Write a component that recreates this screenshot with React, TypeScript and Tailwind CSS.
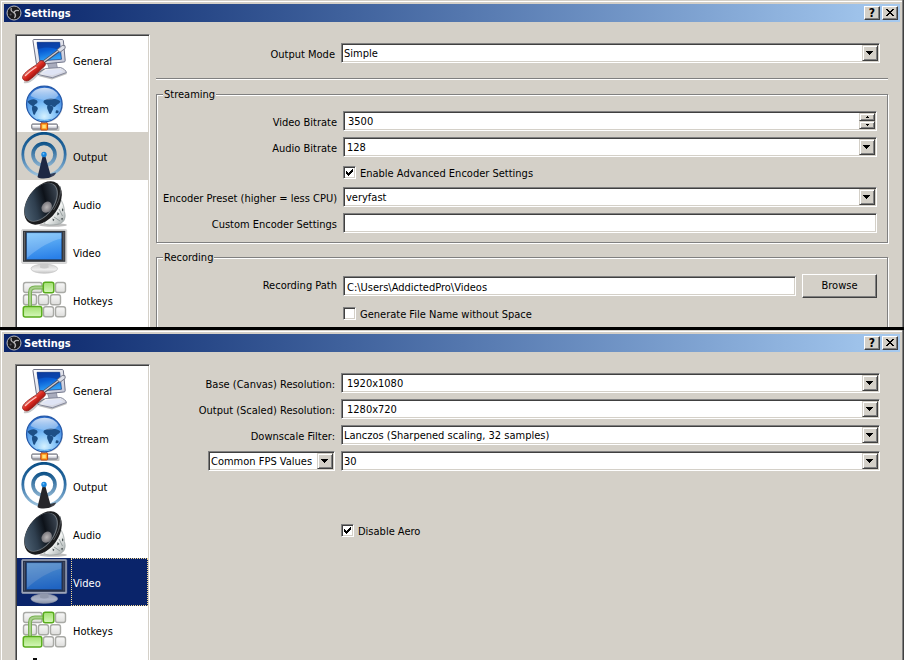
import { useState } from "react";
import type { ReactNode } from "react";
import clsx from "clsx";

const sunken =
  "border border-t-[#808080] border-l-[#808080] border-r-white border-b-white shadow-[inset_1px_1px_#404040,inset_-1px_-1px_#d4d0c8]";
const raised =
  "bg-[#d4d0c8] border border-t-white border-l-white border-r-[#404040] border-b-[#404040] shadow-[inset_-1px_-1px_#808080]";
const raisedThick =
  "bg-[#d4d0c8] border border-t-[#d4d0c8] border-l-[#d4d0c8] border-r-[#404040] border-b-[#404040] shadow-[inset_1px_1px_#fff,inset_-1px_-1px_#808080]";

const ObsLogo = () => (
  <svg viewBox="0 0 16 16" className="size-4" aria-hidden="true">
    <circle cx="8" cy="8" r="7" fill="#1c1a1c" stroke="#b9b9bd" strokeWidth="1" />
    <g fill="none" stroke="#b4b2b4" strokeWidth="1.3" strokeLinecap="round">
      <path d="M5.2 3.4c-.6 2 .6 3.6 2.6 4" />
      <path d="M12.4 5.6c-2-.7-3.8.2-4.4 2.1" />
      <path d="M8.6 12.6c1.2-1.5.9-3.6-.6-4.8" />
    </g>
    <circle cx="4.6" cy="9.4" r="1" fill="#55535a" />
  </svg>
);

const GeneralIcon = () => (
  <svg viewBox="0 0 48 48" className="size-12" aria-hidden="true">
    <defs>
      <linearGradient id="gen-screen" x1="0" y1="0" x2="0.3" y2="1">
        <stop offset="0" stopColor="#0a3fa8" />
        <stop offset="0.5" stopColor="#0a5fd6" />
        <stop offset="1" stopColor="#2fa0f5" />
      </linearGradient>
      <linearGradient id="gen-case" x1="0" y1="0" x2="1" y2="1">
        <stop offset="0" stopColor="#ffffff" />
        <stop offset="1" stopColor="#c3c6d6" />
      </linearGradient>
      <linearGradient id="gen-handle" gradientUnits="userSpaceOnUse" x1="9" y1="32" x2="16" y2="40">
        <stop offset="0" stopColor="#f0847a" />
        <stop offset="0.45" stopColor="#dd2c22" />
        <stop offset="1" stopColor="#8f0f0c" />
      </linearGradient>
    </defs>
    <path d="M18 40l14 3.500 15-5.500-2-3-12 1z" fill="#000" opacity="0.25" />
    <path d="M27 26l9-1 1.500 7-8 2z" fill="#a9acbd" stroke="#70748a" strokeWidth="0.6" />
    <path d="M17.500 37l8-4.500L40.500 31.500c3 1 5.500 3 6 5l-14 5.200-14.500-3.200z" fill="url(#gen-case)" stroke="#7b7f93" strokeWidth="0.9" strokeLinejoin="round" />
    <path d="M21.500 37l6-3 12-.8 3.500 2.600-11 3.400z" fill="#dfe4f5" />
    <path d="M14 3.500h28c1 0 1.300.5 1.400 1.400l1.800 19.500c0 1-.4 1.500-1.400 1.600L18 28.500c-1 0-1.500-.5-1.700-1.400L13 5c-.1-1 .1-1.500 1-1.500z" fill="url(#gen-case)" stroke="#6e7287" strokeWidth="1" />
    <path d="M17 6.300h22.700l1.800 17-21.700 1.700z" fill="url(#gen-screen)" stroke="#0a2a70" strokeWidth="0.6" />
    <path d="M17.500 13c8-2.500 15-2 23 1.500L39.500 6.500H17z" fill="#0b3796" opacity="0.6" />
    <path d="M21.500 27.500L39 14.500" stroke="#4b4e5c" strokeWidth="2.900" />
    <path d="M21.500 27.200L39 14.200" stroke="#c9ccd8" strokeWidth="1.300" />
    <path d="M37 13.800l5.200-4.300 2.800.2.200 2.600-5.200 4z" fill="#dcdfe8" stroke="#6d7080" strokeWidth="0.9" strokeLinejoin="round" />
    <path d="M4 46c4 1.200 7-1 10.500-4.500L24 32.500" fill="none" stroke="#000" strokeWidth="2" opacity="0.22" />
    <path d="M20.500 24.800c2-.8 5.300 1.800 4.800 4-.2 1.600-2.200 2.400-3.600 4C17.500 37 12.500 42 9 44.200 5.500 46.200 1.700 43.500 2.700 40.500c1.300-4 9.100-8.700 13.700-11.800 1.900-1.200 2.600-3.300 4.100-3.900z" fill="url(#gen-handle)" stroke="#8b1512" strokeWidth="0.8" />
    <path d="M5.500 39.500c3-3.300 7-6 10.500-8.300" fill="none" stroke="#ffc9c2" strokeWidth="1.200" strokeLinecap="round" />
  </svg>
);

const StreamIcon = () => (
  <svg viewBox="0 0 48 48" className="size-12" aria-hidden="true">
    <defs>
      <radialGradient id="globe" cx="0.5" cy="0.85" r="0.85">
        <stop offset="0" stopColor="#d4f1ff" />
        <stop offset="0.4" stopColor="#7fc0f8" />
        <stop offset="0.85" stopColor="#3a84de" />
        <stop offset="1" stopColor="#1f5fc0" />
      </radialGradient>
      <linearGradient id="globe-shine" x1="0" y1="0" x2="0" y2="1">
        <stop offset="0" stopColor="#ffffff" stopOpacity="0.8" />
        <stop offset="1" stopColor="#ffffff" stopOpacity="0.2" />
      </linearGradient>
    </defs>
    <rect x="12.500" y="42" width="27" height="5" rx="1" fill="#000" opacity="0.22" />
    <rect x="21.800" y="37" width="5" height="4" fill="#d5d7dd" stroke="#6c6e78" strokeWidth="0.8" />
    <rect x="11.800" y="40" width="25.500" height="5" rx="0.8" fill="#cfd0d8" stroke="#666873" strokeWidth="1" />
    <rect x="12.500" y="41" width="24" height="1.500" fill="#fff" />
    <rect x="20.800" y="39" width="6.800" height="7" rx="0.8" fill="#ff9a1f" stroke="#c2420a" strokeWidth="1" />
    <rect x="22.300" y="40.800" width="3.500" height="3.500" fill="#ffe27a" />
    <circle cx="25" cy="20.800" r="18" fill="#000" opacity="0.15" />
    <circle cx="24.300" cy="20" r="17.800" fill="url(#globe)" stroke="#2357a8" strokeWidth="1.200" />
    <g fill="#1d4f86">
      <path d="M7.500 17.500c1.500-1.500 4-2.500 6.500-2.300 2 .3 4 1.500 3.500 3-.4 1.500-2.500 1.600-3.200 3-.4 1.200-1.500 1-2.300.6-1.600-.8-3.300-2.300-4.500-4.300z" />
      <path d="M12.500 22c2-.6 5.500.4 5.300 2.700-.2 2-2 3-2.800 5.500-.4 1-1.500.6-1.900-.8-.5-2.300-2-5-.6-7.400z" />
      <path d="M24 16.500c2.500-2 6-2.500 9-1.800 3 .5 5.500.8 7.300 2.500-.3 2-1.800 2.300-3 3.300-1.500.8-1.800 3-3.400 2.500-1.200-.8-3.200-2.700-4.400-1.800-1 1-2.600.3-3.600-.6-1.600-1.400-3.300-2.300-1.900-4.100z" />
      <path d="M27.500 21.500c2-1 5.500 0 5.800 2 .3 2.200-1.500 3.300-2.100 5.800-.5 1.300-1.800 1-2.200-.5-.6-2.400-2.800-4.900-1.500-7.300z" />
      <path d="M36 26.500c1.500-.7 3 .2 2.600 1.700-.5 1.300-2.700 1.600-3.100.3z" />
    </g>
    <path d="M10.500 12c2-5.500 8-8.300 14-8.300S36.500 6.500 38.300 11.500c-3 4-7 4.500-11 4.500-6 0-11.500-1.500-16.800-4z" fill="url(#globe-shine)" />
    <path d="M17 35.200c5 1.600 9.500 1.600 14.500 0" fill="none" stroke="#4aa0e6" strokeWidth="1" />
  </svg>
);

const OutputIcon = () => (
  <svg viewBox="0 0 48 48" className="size-12" aria-hidden="true">
    <defs>
      <linearGradient id="ring" gradientUnits="userSpaceOnUse" x1="0" y1="0" x2="0" y2="46">
        <stop offset="0" stopColor="#0a4f86" />
        <stop offset="0.45" stopColor="#2c6ca3" />
        <stop offset="1" stopColor="#a9cce4" />
      </linearGradient>
      <linearGradient id="ring-inner" gradientUnits="userSpaceOnUse" x1="0" y1="10" x2="0" y2="35">
        <stop offset="0" stopColor="#0a4f86" />
        <stop offset="1" stopColor="#8db4d2" />
      </linearGradient>
    </defs>
    <circle cx="24" cy="22.500" r="21.200" fill="none" stroke="url(#ring)" strokeWidth="2.800" />
    <circle cx="24" cy="22.500" r="11" fill="none" stroke="url(#ring-inner)" strokeWidth="3.600" />
    <path d="M26 43l9.800-2.500c.4 2-2.800 4.500-8 5.500z" fill="currentColor" opacity="0.85" />
    <path d="M22.700 24h2.600L31 44.500c-2 2.400-11.500 2.600-13.500.4z" fill="currentColor" />
    <circle cx="24" cy="22.500" r="2.700" fill="#1583dc" />
    <circle cx="23.500" cy="21.800" r="1" fill="#6fc0f8" />
  </svg>
);

const AudioIcon = () => (
  <svg viewBox="0 0 48 48" className="size-12" aria-hidden="true">
    <defs>
      <linearGradient id="cone" gradientUnits="userSpaceOnUse" x1="6" y1="10" x2="34" y2="34">
        <stop offset="0" stopColor="#4c6072" />
        <stop offset="0.35" stopColor="#2f3f4f" />
        <stop offset="0.65" stopColor="#0d1219" />
        <stop offset="1" stopColor="#38424e" />
      </linearGradient>
      <linearGradient id="magnet" x1="0" y1="0" x2="1" y2="1">
        <stop offset="0" stopColor="#8c9494" />
        <stop offset="0.5" stopColor="#f2f4f3" />
        <stop offset="1" stopColor="#9aa2a2" />
      </linearGradient>
      <radialGradient id="dust">
        <stop offset="0" stopColor="#b9b6b7" />
        <stop offset="1" stopColor="#77767b" />
      </radialGradient>
    </defs>
    <ellipse cx="33" cy="45" rx="14" ry="1.800" fill="#000" opacity="0.25" />
    <path d="M41 20c2 3 3.500 7.500 3.300 11.500.8 2 1.200 4 .6 6.500-.8 4-4 6-8 6.500-5 .8-10 .7-13-1z" fill="url(#magnet)" stroke="#8b9393" strokeWidth="0.6" />
    <path d="M37.500 32l2 2-2.300 1.500zM42 28l1.500 2-1.500 1.500zM32.500 38.500l2 1.200-1.500 1.600zM41 38.500l2-.5-.8 2.500z" fill="#3b4446" />
    <path d="M39 29l3.500 7M34 37l6 4" stroke="#8f9898" strokeWidth="0.9" />
    <ellipse cx="23" cy="23" rx="24.200" ry="15.500" transform="rotate(-55 23 23)" fill="#1b1c1e" />
    <ellipse cx="21.300" cy="22.200" rx="22" ry="13.200" transform="rotate(-55 21.300 22.200)" fill="#6d757c" />
    <ellipse cx="20.700" cy="22" rx="21.400" ry="12.700" transform="rotate(-55 20.700 22)" fill="url(#cone)" />
    <ellipse cx="26.700" cy="27.200" rx="6" ry="4.800" transform="rotate(-55 26.700 27.200)" fill="url(#dust)" />
    <path d="M39.800 6c2 6.500-.8 15.500-6.300 24" fill="none" stroke="#5a5f63" strokeWidth="0.9" />
  </svg>
);

const VideoIcon = () => (
  <svg viewBox="0 0 48 48" className="size-12" aria-hidden="true">
    <defs>
      <linearGradient id="tv-screen" x1="0.3" y1="0" x2="0.5" y2="1">
        <stop offset="0" stopColor="#6fbdf9" />
        <stop offset="1" stopColor="#2a80e8" />
      </linearGradient>
      <linearGradient id="tv-stand" x1="0" y1="0" x2="0" y2="1">
        <stop offset="0" stopColor="#cfcfcf" />
        <stop offset="0.6" stopColor="#efefef" />
        <stop offset="1" stopColor="#c2c2c2" />
      </linearGradient>
    </defs>
    <path d="M20 35.500h8l.8 4h-9.600z" fill="#b5b5b5" />
    <ellipse cx="24.300" cy="40.700" rx="13.300" ry="4.600" fill="url(#tv-stand)" stroke="#c4c4c4" strokeWidth="0.7" />
    <path d="M20.500 36h7.500l.8 3.500c-2.500 1.200-6.500 1.200-9 0z" fill="#c9c9c9" />
    <rect x="1.700" y="1.500" width="45" height="34" rx="1" fill="#dcdcdc" stroke="#c8c8c8" strokeWidth="0.7" />
    <rect x="3" y="2.800" width="42.300" height="31" fill="#35383d" />
    <path d="M4.500 4v28.500M43.800 4v28.500" stroke="#6d7075" strokeWidth="0.8" />
    <rect x="6.700" y="4.800" width="35" height="26.500" fill="url(#tv-screen)" stroke="#1d4f90" strokeWidth="0.6" />
    <path d="M7 5h34.500v5.500C30 13 17 21 7 30z" fill="#fff" opacity="0.2" />
  </svg>
);

const greyKeys = [
  { x: 3.5, y: 6.5, w: 18.5 },
  { x: 35.5, y: 6.5, w: 10 },
  { x: 3.5, y: 18.7, w: 13 },
  { x: 18.5, y: 18.7, w: 10 },
  { x: 30.5, y: 18.7, w: 10 },
  { x: 23.5, y: 30.7, w: 10 },
  { x: 35.5, y: 30.7, w: 10 },
];

const HotkeysIcon = () => (
  <svg viewBox="0 0 48 48" className="size-12" aria-hidden="true">
    <defs>
      <linearGradient id="key" x1="0" y1="0" x2="0" y2="1">
        <stop offset="0" stopColor="#f8f8f8" />
        <stop offset="1" stopColor="#dededc" />
      </linearGradient>
      <linearGradient id="key-on" x1="0" y1="0" x2="0" y2="1">
        <stop offset="0" stopColor="#a2e070" />
        <stop offset="1" stopColor="#d6f7bb" />
      </linearGradient>
    </defs>
    {greyKeys.map((k) => (
      <rect key={`${k.x}-${k.y}`} x={k.x} y={k.y} width={k.w} height="10" rx="2.200" fill="url(#key)" stroke="#a9aaa6" strokeWidth="1.400" />
    ))}
    <path d="M24 11.500h-9c-3.500 0-5 1.500-5 5V32" fill="none" stroke="#79b152" strokeWidth="4" />
    <path d="M24 11.500h-9c-3.500 0-5 1.500-5 5V32" fill="none" stroke="#a8cf8c" strokeWidth="2" />
    <rect x="23.300" y="6.300" width="10.500" height="10.500" rx="2" fill="url(#key-on)" stroke="#58ac1c" strokeWidth="1.500" />
    <rect x="3.300" y="30.500" width="18.500" height="10.500" rx="2" fill="url(#key-on)" stroke="#58ac1c" strokeWidth="1.500" />
  </svg>
);

const AdvancedIcon = () => (
  <svg viewBox="0 0 48 48" className="size-12" aria-hidden="true">
    <path d="M13 4h4v4h-4zM9 8h12v8H9z" fill="#0c0c0c" />
    <circle cx="24" cy="26" r="14" fill="none" stroke="#1a1a1a" strokeWidth="6" />
  </svg>
);

const pages = [
  { name: "General", icon: GeneralIcon },
  { name: "Stream", icon: StreamIcon },
  { name: "Output", icon: OutputIcon },
  { name: "Audio", icon: AudioIcon },
  { name: "Video", icon: VideoIcon },
  { name: "Hotkeys", icon: HotkeysIcon },
];

type SidebarProps = {
  current: string;
  focused?: boolean;
};

const Sidebar = ({ current, focused }: SidebarProps) => (
  <nav className={clsx("-mb-1 w-[135px] shrink-0 overflow-hidden bg-white p-px", sunken)}>
    <ul>
      {pages.map(({ name, icon: Icon }) => {
        const selected = name === current;
        return (
          <li key={name}>
            <button
              type="button"
              aria-current={selected ? "page" : undefined}
              className={clsx(
                "flex h-12 w-full items-stretch pl-[3px] text-left",
                selected && focused && "bg-[#0a246a] text-white",
                selected && !focused && "bg-[#d4d0c8]"
              )}
            >
              <span
                className={clsx(
                  "w-[51px] shrink-0",
                  selected && focused && "opacity-70",
                  selected ? "text-[#1d2844]" : "text-[#26262a]"
                )}
              >
                <Icon />
              </span>
              <span
                className={clsx(
                  "flex flex-1 items-center border border-dotted pt-1 pl-px",
                  selected && focused ? "border-[#f5db95]" : "border-transparent"
                )}
              >
                {name}
              </span>
            </button>
          </li>
        );
      })}
      <li>
        <button type="button" aria-label="Advanced" className="flex h-12 w-full pl-[3px]">
          <AdvancedIcon />
        </button>
      </li>
    </ul>
  </nav>
);

type WindowProps = {
  current: string;
  focused?: boolean;
  className?: string;
  children: ReactNode;
};

const SettingsWindow = ({ current, focused, className, children }: WindowProps) => (
  <section
    className={clsx(
      "flex min-h-0 flex-col overflow-hidden bg-[#d4d0c8] px-1 pt-1 shadow-[inset_-1px_0_#404040,inset_-2px_0_#808080,inset_1px_1px_#d4d0c8,inset_2px_2px_#fff]",
      className
    )}
  >
    <header className="flex h-[18px] shrink-0 items-center gap-0.5 bg-linear-to-r from-[#0a246a] to-[#a6caf0] px-0.5">
      <ObsLogo />
      <h1 className="flex-1 pt-0.5 font-bold text-white">Settings</h1>
      <button type="button" aria-label="Help" className={clsx("flex h-3.5 w-4 items-center justify-center text-xs font-bold", raised)}>
        ?
      </button>
      <button type="button" aria-label="Close" className={clsx("flex h-3.5 w-4 items-start pt-0.5 pl-[3px]", raised)}>
        <svg viewBox="0 0 8 7" className="h-[7px] w-2" shapeRendering="crispEdges" aria-hidden="true">
          <path d="M0 0h2v1h1v1h2V1h1V0h2v1H7v1H6v1H5v1h1v1h1v1h1v1H6V6H5V5H3v1H2v1H0V6h1V5h1V4h1V3H2V2H1V1H0z" />
        </svg>
      </button>
    </header>
    <div className="flex min-h-0 flex-1 gap-1.5 pt-3 pr-3 pl-[11px]">
      <Sidebar current={current} focused={focused} />
      <div className="min-w-0 flex-1 pt-[9px]">{children}</div>
    </div>
  </section>
);

type SelectProps = {
  id: string;
  options: string[];
  label?: string;
  inset?: string;
};

const Select = ({ id, options, label, inset = "pl-0.5" }: SelectProps) => (
  <div className="relative">
    <select
      id={id}
      aria-label={label}
      className={clsx("block h-5 w-full appearance-none bg-white pt-0.5 pr-5 outline-none", sunken, inset)}
    >
      {options.map((option) => (
        <option key={option}>{option}</option>
      ))}
    </select>
    <span className={clsx("pointer-events-none absolute top-0.5 right-0.5 flex size-4 items-center pl-[3px]", raisedThick)}>
      <svg viewBox="0 0 7 4" className="h-1 w-[7px]" shapeRendering="crispEdges" aria-hidden="true">
        <path d="M0 0h7v1H6v1H5v1H4v1H3V3H2V2H1V1H0z" />
      </svg>
    </span>
  </div>
);

type TextBoxProps = {
  id: string;
  value?: string;
};

const TextBox = ({ id, value = "" }: TextBoxProps) => (
  <input
    id={id}
    type="text"
    defaultValue={value}
    className={clsx("h-5 w-full min-w-0 bg-white px-[3px] pt-0.5 outline-none", sunken)}
  />
);

const SpinBox = ({ id, initial }: { id: string; initial: number }) => {
  const [value, setValue] = useState(initial);
  const spin = "flex h-2 w-4 items-center justify-center";

  return (
    <div className={clsx("flex h-5 bg-white p-px", sunken)}>
      <input
        id={id}
        type="text"
        inputMode="numeric"
        value={value}
        onChange={(e) => setValue(Number(e.target.value) || 0)}
        className="min-w-0 flex-1 pt-0.5 pl-[3px] outline-none"
      />
      <div>
        <button type="button" aria-label="Increase" onClick={() => setValue(value + 1)} className={clsx(spin, raisedThick)}>
          <svg viewBox="0 0 3 2" className="h-0.5 w-[3px]" shapeRendering="crispEdges" aria-hidden="true">
            <path d="M1 0h1v1h1v1H0V1h1z" />
          </svg>
        </button>
        <button type="button" aria-label="Decrease" onClick={() => setValue(value - 1)} className={clsx(spin, raisedThick)}>
          <svg viewBox="0 0 3 2" className="h-0.5 w-[3px]" shapeRendering="crispEdges" aria-hidden="true">
            <path d="M0 0h3v1H2v1H1V1H0z" />
          </svg>
        </button>
      </div>
    </div>
  );
};

type CheckBoxProps = {
  id: string;
  label: string;
  checked?: boolean;
  className?: string;
};

const CheckBox = ({ id, label, checked, className }: CheckBoxProps) => (
  <div className={clsx("col-start-2 flex h-[18px] items-center gap-1", className)}>
    <span className="relative size-[13px]">
      <input
        id={id}
        type="checkbox"
        defaultChecked={checked}
        className={clsx("peer block size-[13px] appearance-none bg-white", sunken)}
      />
      <svg
        viewBox="0 0 7 7"
        className="pointer-events-none absolute top-[3px] left-[3px] hidden size-[7px] peer-checked:block"
        shapeRendering="crispEdges"
        aria-hidden="true"
      >
        <path d="M0 2h1v1h1v1h1V3h1V2h1V1h1V0h1v3H6v1H5v1H4v1H3v1H2V6H1V5H0z" />
      </svg>
    </span>
    <label htmlFor={id} className="pt-1">{label}</label>
  </div>
);

type FieldLabelProps = {
  htmlFor: string;
  className?: string;
  children: ReactNode;
};

const FieldLabel = ({ htmlFor, className, children }: FieldLabelProps) => (
  <label htmlFor={htmlFor} className={clsx("justify-self-end pt-1 whitespace-nowrap", className)}>
    {children}
  </label>
);

const Group = ({ title, children }: { title: string; children: ReactNode }) => (
  <fieldset className="mt-[5px] border border-[#808080] px-2.5 pt-2 pb-[9px] shadow-[1px_1px_#fff,inset_1px_1px_#fff]">
    <legend className="-ml-1 bg-[#d4d0c8] px-px pt-0.5">{title}</legend>
    <div className="grid grid-cols-[170px_1fr] items-center gap-1.5">{children}</div>
  </fieldset>
);

const OutputPage = () => (
  <form>
    <div className="grid grid-cols-[179px_1fr] items-center gap-1.5 pr-2">
      <FieldLabel htmlFor="output-mode">Output Mode</FieldLabel>
      <Select id="output-mode" options={["Simple", "Advanced"]} />
    </div>
    <hr className="mt-[15px] border-t border-b border-t-[#808080] border-b-white" />

    <Group title="Streaming">
      <FieldLabel htmlFor="video-bitrate">Video Bitrate</FieldLabel>
      <SpinBox id="video-bitrate" initial={3500} />
      <FieldLabel htmlFor="audio-bitrate">Audio Bitrate</FieldLabel>
      <Select id="audio-bitrate" options={["128", "160", "192", "320"]} inset="pl-[3px]" />
      <CheckBox id="advanced-encoder" label="Enable Advanced Encoder Settings" checked />
      <FieldLabel htmlFor="encoder-preset">Encoder Preset (higher = less CPU)</FieldLabel>
      <Select id="encoder-preset" options={["veryfast", "superfast", "ultrafast"]} />
      <FieldLabel htmlFor="encoder-settings">Custom Encoder Settings</FieldLabel>
      <TextBox id="encoder-settings" />
    </Group>

    <Group title="Recording">
      <FieldLabel htmlFor="recording-path" className="self-start">
        Recording Path
      </FieldLabel>
      <div className="flex items-center gap-1.5">
        <TextBox id="recording-path" value="C:\Users\AddictedPro\Videos" />
        <button type="button" className={clsx("h-6 w-[75px] shrink-0", raised)}>
          Browse
        </button>
      </div>
      <CheckBox id="no-space" label="Generate File Name without Space" />
    </Group>
  </form>
);

const VideoPage = () => (
  <form className="grid grid-cols-[179px_1fr] items-center gap-1.5 pr-2">
    <FieldLabel htmlFor="base-resolution">Base (Canvas) Resolution:</FieldLabel>
    <Select id="base-resolution" options={["1920x1080", "1280x720"]} inset="pl-[5px]" />
    <FieldLabel htmlFor="output-resolution">Output (Scaled) Resolution:</FieldLabel>
    <Select id="output-resolution" options={["1280x720", "1920x1080"]} inset="pl-[5px]" />
    <FieldLabel htmlFor="downscale-filter">Downscale Filter:</FieldLabel>
    <Select id="downscale-filter" options={["Lanczos (Sharpened scaling, 32 samples)", "Bicubic", "Bilinear"]} />
    <div className="w-[127px] justify-self-end">
      <Select id="fps-type" label="FPS type" options={["Common FPS Values", "Integer FPS Value"]} />
    </div>
    <Select id="fps" label="FPS" options={["30", "60"]} />
    <CheckBox id="disable-aero" label="Disable Aero" checked className="mt-11" />
  </form>
);

const App = () => {
  return (
    <main className="grid h-screen grid-rows-2 bg-[#d4d0c8] font-['DejaVu_Sans_Condensed','DejaVu_Sans',sans-serif] text-[11px] leading-4 text-black">
      <SettingsWindow current="Output" className="border-b-3 border-black">
        <OutputPage />
      </SettingsWindow>
      <SettingsWindow current="Video" focused>
        <VideoPage />
      </SettingsWindow>
    </main>
  );
};

export default App;
